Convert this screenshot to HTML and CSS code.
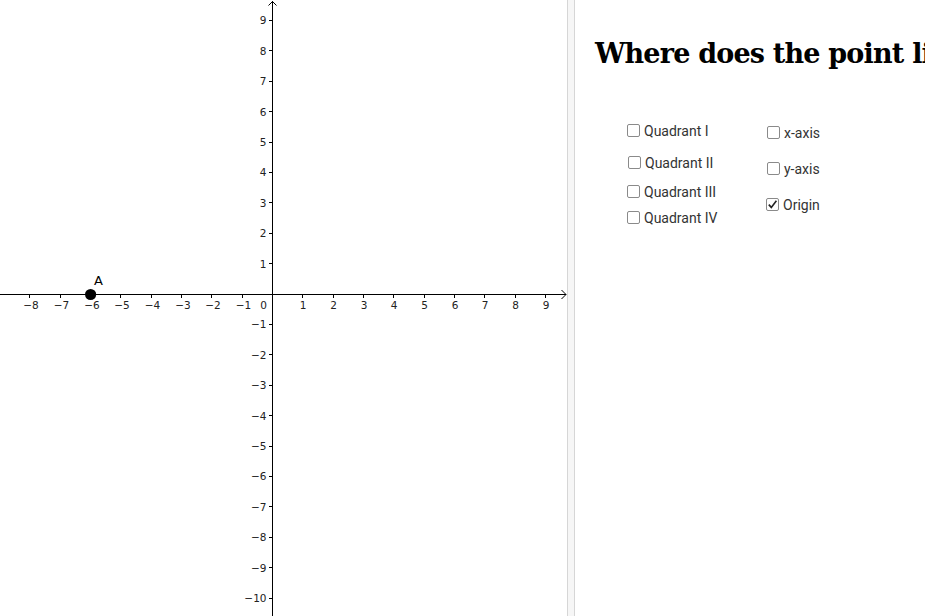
FILE: index.html
```html
<!DOCTYPE html>
<html>
<head>
<meta charset="utf-8">
<link rel="stylesheet" href="styles.css">
</head>
<body>
<div class="app">
  <div class="graphics">
    <svg class="plot" width="567" height="616" viewBox="0 0 567 616" xmlns="http://www.w3.org/2000/svg">
      <g class="axes" stroke="#000" stroke-width="1" fill="none">
        <line x1="0" y1="294.5" x2="566" y2="294.5"/>
        <line x1="272.5" y1="1" x2="272.5" y2="616"/>
        <polyline points="561.5,290 566,294.5 561.5,299"/>
        <polyline points="268.5,5.5 272.5,1.5 276.5,5.5"/>
      </g>
      <g class="ticks" stroke="#000" stroke-width="1" shape-rendering="crispEdges">
        <line x1="29.7" y1="294" x2="29.7" y2="298"/>
        <line x1="60.05" y1="294" x2="60.05" y2="298"/>
        <line x1="90.4" y1="294" x2="90.4" y2="298"/>
        <line x1="120.75" y1="294" x2="120.75" y2="298"/>
        <line x1="151.1" y1="294" x2="151.1" y2="298"/>
        <line x1="181.45" y1="294" x2="181.45" y2="298"/>
        <line x1="211.8" y1="294" x2="211.8" y2="298"/>
        <line x1="242.15" y1="294" x2="242.15" y2="298"/>
        <line x1="302.85" y1="294" x2="302.85" y2="298"/>
        <line x1="333.2" y1="294" x2="333.2" y2="298"/>
        <line x1="363.55" y1="294" x2="363.55" y2="298"/>
        <line x1="393.9" y1="294" x2="393.9" y2="298"/>
        <line x1="424.25" y1="294" x2="424.25" y2="298"/>
        <line x1="454.6" y1="294" x2="454.6" y2="298"/>
        <line x1="484.95" y1="294" x2="484.95" y2="298"/>
        <line x1="515.3" y1="294" x2="515.3" y2="298"/>
        <line x1="545.65" y1="294" x2="545.65" y2="298"/>

        <line x1="269" y1="20.4" x2="273" y2="20.4"/>
        <line x1="269" y1="50.8" x2="273" y2="50.8"/>
        <line x1="269" y1="81.2" x2="273" y2="81.2"/>
        <line x1="269" y1="111.6" x2="273" y2="111.6"/>
        <line x1="269" y1="142" x2="273" y2="142"/>
        <line x1="269" y1="172.4" x2="273" y2="172.4"/>
        <line x1="269" y1="202.8" x2="273" y2="202.8"/>
        <line x1="269" y1="233.2" x2="273" y2="233.2"/>
        <line x1="269" y1="263.6" x2="273" y2="263.6"/>
        <line x1="269" y1="324.4" x2="273" y2="324.4"/>
        <line x1="269" y1="354.8" x2="273" y2="354.8"/>
        <line x1="269" y1="385.2" x2="273" y2="385.2"/>
        <line x1="269" y1="415.6" x2="273" y2="415.6"/>
        <line x1="269" y1="446" x2="273" y2="446"/>
        <line x1="269" y1="476.4" x2="273" y2="476.4"/>
        <line x1="269" y1="506.8" x2="273" y2="506.8"/>
        <line x1="269" y1="537.2" x2="273" y2="537.2"/>
        <line x1="269" y1="567.6" x2="273" y2="567.6"/>
        <line x1="269" y1="598" x2="273" y2="598"/>
      </g>
      <g class="xlabels" text-anchor="middle">
        <text x="31" y="309">−8</text>
        <text x="61.5" y="309">−7</text>
        <text x="92" y="309">−6</text>
        <text x="122" y="309">−5</text>
        <text x="152.5" y="309">−4</text>
        <text x="183" y="309">−3</text>
        <text x="213" y="309">−2</text>
        <text x="243.5" y="309">−1</text>
        <text x="263.5" y="309">0</text>
        <text x="303" y="309">1</text>
        <text x="333.5" y="309">2</text>
        <text x="364" y="309">3</text>
        <text x="394" y="309">4</text>
        <text x="424.5" y="309">5</text>
        <text x="455" y="309">6</text>
        <text x="485" y="309">7</text>
        <text x="515.5" y="309">8</text>
        <text x="546" y="309">9</text>
      </g>
      <g class="ylabels" text-anchor="end">
        <text x="266.5" y="24.4">9</text>
        <text x="266.5" y="54.8">8</text>
        <text x="266.5" y="85.2">7</text>
        <text x="266.5" y="115.6">6</text>
        <text x="266.5" y="146">5</text>
        <text x="266.5" y="176.4">4</text>
        <text x="266.5" y="206.8">3</text>
        <text x="266.5" y="237.2">2</text>
        <text x="266.5" y="267.6">1</text>
        <text x="266.5" y="328.4">−1</text>
        <text x="266.5" y="358.8">−2</text>
        <text x="266.5" y="389.2">−3</text>
        <text x="266.5" y="419.6">−4</text>
        <text x="266.5" y="450">−5</text>
        <text x="266.5" y="480.4">−6</text>
        <text x="266.5" y="510.8">−7</text>
        <text x="266.5" y="541.2">−8</text>
        <text x="266.5" y="571.6">−9</text>
        <text x="266.5" y="602">−10</text>
      </g>
      <circle cx="90.6" cy="294.5" r="5.6" fill="#000"/>
      <text class="ptlabel" x="94" y="285">A</text>
    </svg>
  </div>
  <div class="divider"></div>
  <div class="panel">
    <h1 class="title">Where does the point lie?</h1>
    <div class="checks">
      <div class="col col-left">
        <label class="item q1"><span class="box"></span><span class="lbl">Quadrant I</span></label>
        <label class="item q2"><span class="box"></span><span class="lbl">Quadrant II</span></label>
        <label class="item q3"><span class="box"></span><span class="lbl">Quadrant III</span></label>
        <label class="item q4"><span class="box"></span><span class="lbl">Quadrant IV</span></label>
      </div>
      <div class="col col-right">
        <label class="item xa"><span class="box"></span><span class="lbl">x-axis</span></label>
        <label class="item ya"><span class="box"></span><span class="lbl">y-axis</span></label>
        <label class="item og"><span class="box checked"><svg width="11" height="11" viewBox="0 0 11 11"><polyline points="1.8,5.6 4.3,8.4 9.4,1.8" fill="none" stroke="#222" stroke-width="1.6"/></svg></span><span class="lbl">Origin</span></label>
      </div>
    </div>
  </div>
</div>
</body>
</html>
```

FILE: styles.css
```css
html, body {
  margin: 0;
  padding: 0;
  background: #fff;
  overflow: hidden;
}

.app {
  display: flex;
  width: 925px;
  height: 616px;
  overflow: hidden;
}

.graphics {
  width: 567px;
  height: 616px;
  flex: none;
}

.plot {
  display: block;
}

.plot text {
  font-family: "DejaVu Sans", sans-serif;
  font-size: 10.5px;
  fill: #222;
}

.plot .ptlabel {
  font-size: 13px;
  fill: #000;
}

.divider {
  width: 6px;
  flex: none;
  background: #f6f6f6;
  border-left: 1px solid #d6d6d6;
  border-right: 1px solid #d6d6d6;
}

.panel {
  flex: 1;
  min-width: 0;
  padding: 37px 0 0 20px;
  overflow: hidden;
}

.title {
  margin: 0;
  font-family: "Roboto Slab", "DejaVu Serif", serif;
  font-weight: bold;
  font-size: 27px;
  line-height: 34px;
  white-space: nowrap;
  color: #000;
  letter-spacing: -0.8px;
}

.checks {
  display: flex;
  margin-top: 53px;
  margin-left: 32px;
}

.col {
  display: flex;
  flex-direction: column;
}

.col-left {
  width: 140px;
}

.item {
  display: flex;
  align-items: flex-start;
  gap: 4px;
  height: 13px;
  font-family: Roboto, "Liberation Sans", sans-serif;
  font-size: 14px;
  color: #333;
}

.lbl {
  line-height: 14px;
  margin-top: 0;
}

.box {
  width: 13px;
  height: 13px;
  box-sizing: border-box;
  border: 1px solid #8a8a8a;
  border-radius: 2px;
  background: #fff;
  flex: none;
  display: flex;
  align-items: center;
  justify-content: center;
}

.q2 { margin-top: 19px; margin-left: 1px; }
.q3 { margin-top: 16px; }
.q4 { margin-top: 13px; }

.xa { margin-top: 2px; }
.ya { margin-top: 23px; }
.og { margin-top: 23px; margin-left: -1px; }
```
